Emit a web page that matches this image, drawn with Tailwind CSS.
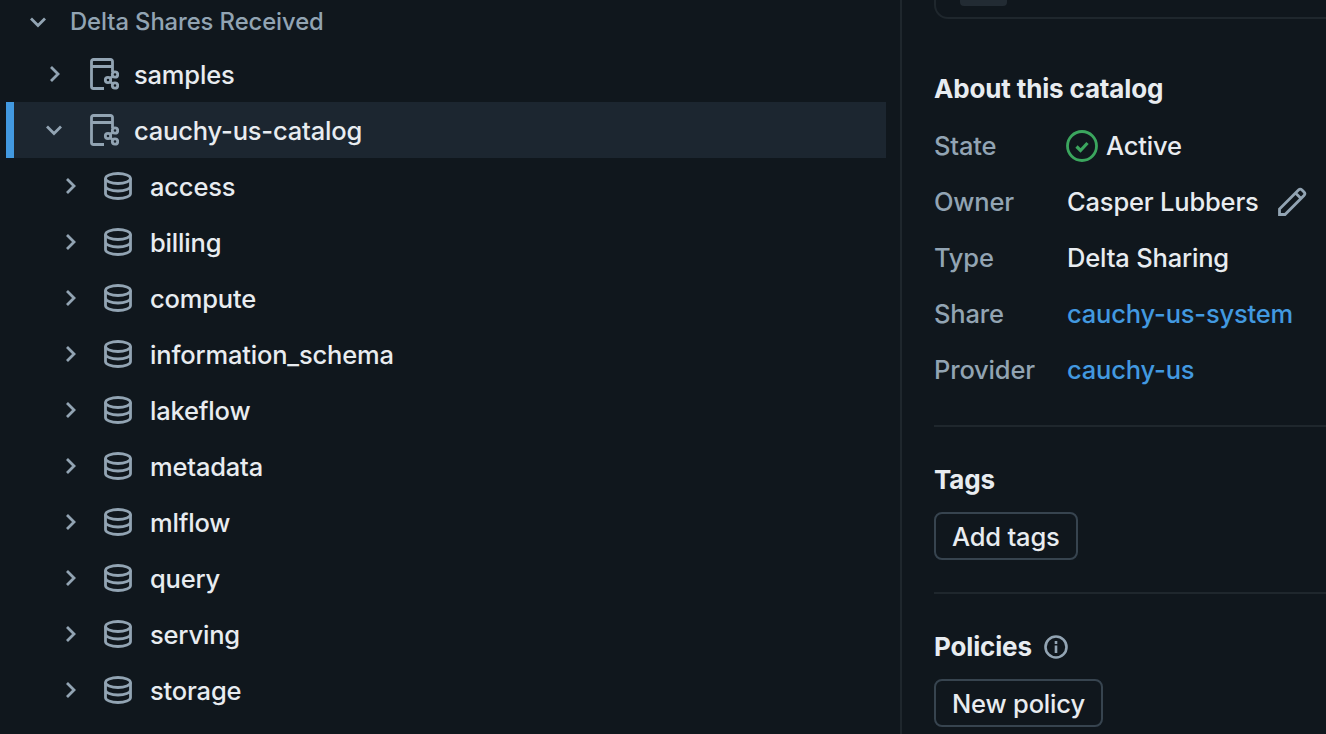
<!doctype html>
<html>

<head>
    <meta charset="UTF-8">
    <meta name="viewport" content="width=device-width, initial-scale=1.0">
    <script src="https://cdn.jsdelivr.net/npm/@tailwindcss/browser@4"></script>
</head>

<body class="h-[734px] overflow-hidden bg-[#10171d] font-['Inter',sans-serif] text-[25.5px] font-[450] tracking-[-0.18px] text-[#e8ecf0]">
    <div class="flex h-[734px] overflow-hidden">
        <!-- tree -->
        <div class="w-[900px] shrink-0 pl-[6px] pr-[14px]">
            <div class="-mt-[2px] flex h-[48px] items-center pl-[22px] text-[#92a4b3]">
                <svg class="h-5 w-5" viewBox="0 0 20 20" fill="none" stroke="currentColor" stroke-width="2.800"><path d="M3 6.500l7 7 7-7"/></svg>
                <span class="ml-[22px] text-[23.8px] tracking-[-0.08px]">Delta Shares Received</span>
            </div>
            <div class="flex h-[56px] items-center pl-[39px]">
                <svg class="h-5 w-5 text-[#92a4b3]" viewBox="0 0 20 20" fill="none" stroke="currentColor" stroke-width="2.800"><path d="M6 3l7 7-7 7"/></svg>
                <svg class="ml-[24px] h-8 w-[30px] text-[#92a4b3]" viewBox="0 0 30 32" fill="none" stroke="currentColor" stroke-width="2.800"><path d="M2.500 8.500h21M23.500 14V3.500a2 2 0 0 0-2-2h-17a2 2 0 0 0-2 2v25a2 2 0 0 0 2 2H15"/><circle cx="19" cy="22" r="2.700"/><circle cx="26" cy="16.500" r="2.700"/><circle cx="26" cy="27.500" r="2.700"/><path d="M21 20.500l3-2.500M21 23.500l3 2.500"/></svg>
                <span class="ml-[15px] pt-[2px]">samples</span>
            </div>
            <div class="flex h-[56px] items-center border-l-[8px] border-[#4299e0] bg-[#1c2630] pl-[30px]">
                <svg class="h-5 w-5 text-[#92a4b3]" viewBox="0 0 20 20" fill="none" stroke="currentColor" stroke-width="2.800"><path d="M3 6.500l7 7 7-7"/></svg>
                <svg class="ml-[25px] h-8 w-[30px] text-[#92a4b3]" viewBox="0 0 30 32" fill="none" stroke="currentColor" stroke-width="2.800"><path d="M2.500 8.500h21M23.500 14V3.500a2 2 0 0 0-2-2h-17a2 2 0 0 0-2 2v25a2 2 0 0 0 2 2H15"/><circle cx="19" cy="22" r="2.700"/><circle cx="26" cy="16.500" r="2.700"/><circle cx="26" cy="27.500" r="2.700"/><path d="M21 20.500l3-2.500M21 23.500l3 2.500"/></svg>
                <span class="ml-[15px] pt-[2px]">cauchy-us-catalog</span>
            </div>
            <div id="schemas"></div>
        </div>

        <!-- details -->
        <div class="min-w-0 flex-1 border-l-2 border-[#1f272d] pl-[32px]">
            <div class="-mt-[30px] -mr-[40px] h-[49px] rounded-b-[14px] border-2 border-[#1f272d] pl-[24px]">
                <div class="mt-[24px] h-[10px] w-[47px] rounded-[4px] bg-[#222b33]"></div>
            </div>
            <h2 class="mt-[52px] text-[26px] leading-[36px] font-bold tracking-[-0.15px]">About this catalog</h2>
            <div class="mt-[11px] grid grid-cols-[133px_1fr] auto-rows-[56px] items-center">
                <span class="text-[#92a4b3]">State</span>
                <span class="flex items-center gap-[8px]">
                    <svg class="-ml-[1px] h-8 w-8" viewBox="0 0 32 32" fill="none" stroke="#3ba65e" stroke-width="2.800"><circle cx="16" cy="16" r="14.500"/><path d="M10.500 16.500l4 4 7-7.500" stroke-width="3.200"/></svg>
                    Active
                </span>
                <span class="text-[#92a4b3]">Owner</span>
                <span class="flex items-center gap-[18px]">
                    Casper Lubbers
                    <svg class="h-[30px] w-[30px] text-[#92a4b3]" viewBox="0 0 30 30" fill="none" stroke="currentColor" stroke-width="2.800"><path d="M2.500 27.500v-5.500L21.500 3a2.500 2.500 0 0 1 3.500 0l2 2a2.500 2.500 0 0 1 0 3.500L8 27.500zM18.500 6l5.500 5.500"/></svg>
                </span>
                <span class="text-[#92a4b3]">Type</span>
                <span>Delta Sharing</span>
                <span class="text-[#92a4b3]">Share</span>
                <span class="text-[#4299e0]">cauchy-us-system</span>
                <span class="text-[#92a4b3]">Provider</span>
                <span class="text-[#4299e0]">cauchy-us</span>
            </div>
            <div class="mt-[27px] border-t-2 border-[#1f272d] pt-[35px]">
                <h2 class="text-[26px] leading-[36px] font-bold tracking-[-0.15px]">Tags</h2>
                <button class="mt-[14px] flex h-[48px] items-center rounded-[8px] border-2 border-[#37444f] px-[16px] pt-[2px]">Add tags</button>
            </div>
            <div class="mt-[32px] border-t-2 border-[#1f272d] pt-[35px]">
                <h2 class="flex items-center gap-[12px] text-[26px] leading-[36px] font-bold tracking-[-0.15px]">
                    Policies
                    <svg class="h-6 w-6 text-[#92a4b3]" viewBox="0 0 24 24" fill="none" stroke="currentColor" stroke-width="2.600"><circle cx="12" cy="12" r="10.500"/><path d="M12 10.500V18M12 6v3"/></svg>
                </h2>
                <button class="mt-[14px] flex h-[48px] items-center rounded-[8px] border-2 border-[#37444f] px-[16px] pt-[2px]">New policy</button>
            </div>
        </div>
    </div>
    <script>
        const schemas = ['access', 'billing', 'compute', 'information_schema', 'lakeflow', 'metadata', 'mlflow', 'query', 'serving', 'storage'];
        const schemasContainer = document.getElementById('schemas');

        function createSchemaRow(name) {
            return `
            <div class="flex h-[56px] items-center pl-[55px]">
                <svg class="h-5 w-5 text-[#92a4b3]" viewBox="0 0 20 20" fill="none" stroke="currentColor" stroke-width="2.800"><path d="M6 3l7 7-7 7"/></svg>
                <svg class="ml-[23px] h-[28px] w-[28px] text-[#92a4b3]" viewBox="0 0 28 28" fill="none" stroke="currentColor" stroke-width="2.800"><ellipse cx="14" cy="6.500" rx="12.500" ry="5"/><path d="M1.500 6.500v15c0 2.800 5.500 5 12.500 5s12.500-2.200 12.500-5v-15M1.500 14c0 2.800 5.500 5 12.500 5s12.500-2.200 12.500-5"/></svg>
                <span class="ml-[18px] pt-[2px]">${name}</span>
            </div>`;
        }

        schemas.forEach(name => {
            schemasContainer.insertAdjacentHTML('beforeend', createSchemaRow(name));
        });
    </script>
</body>
</html>
